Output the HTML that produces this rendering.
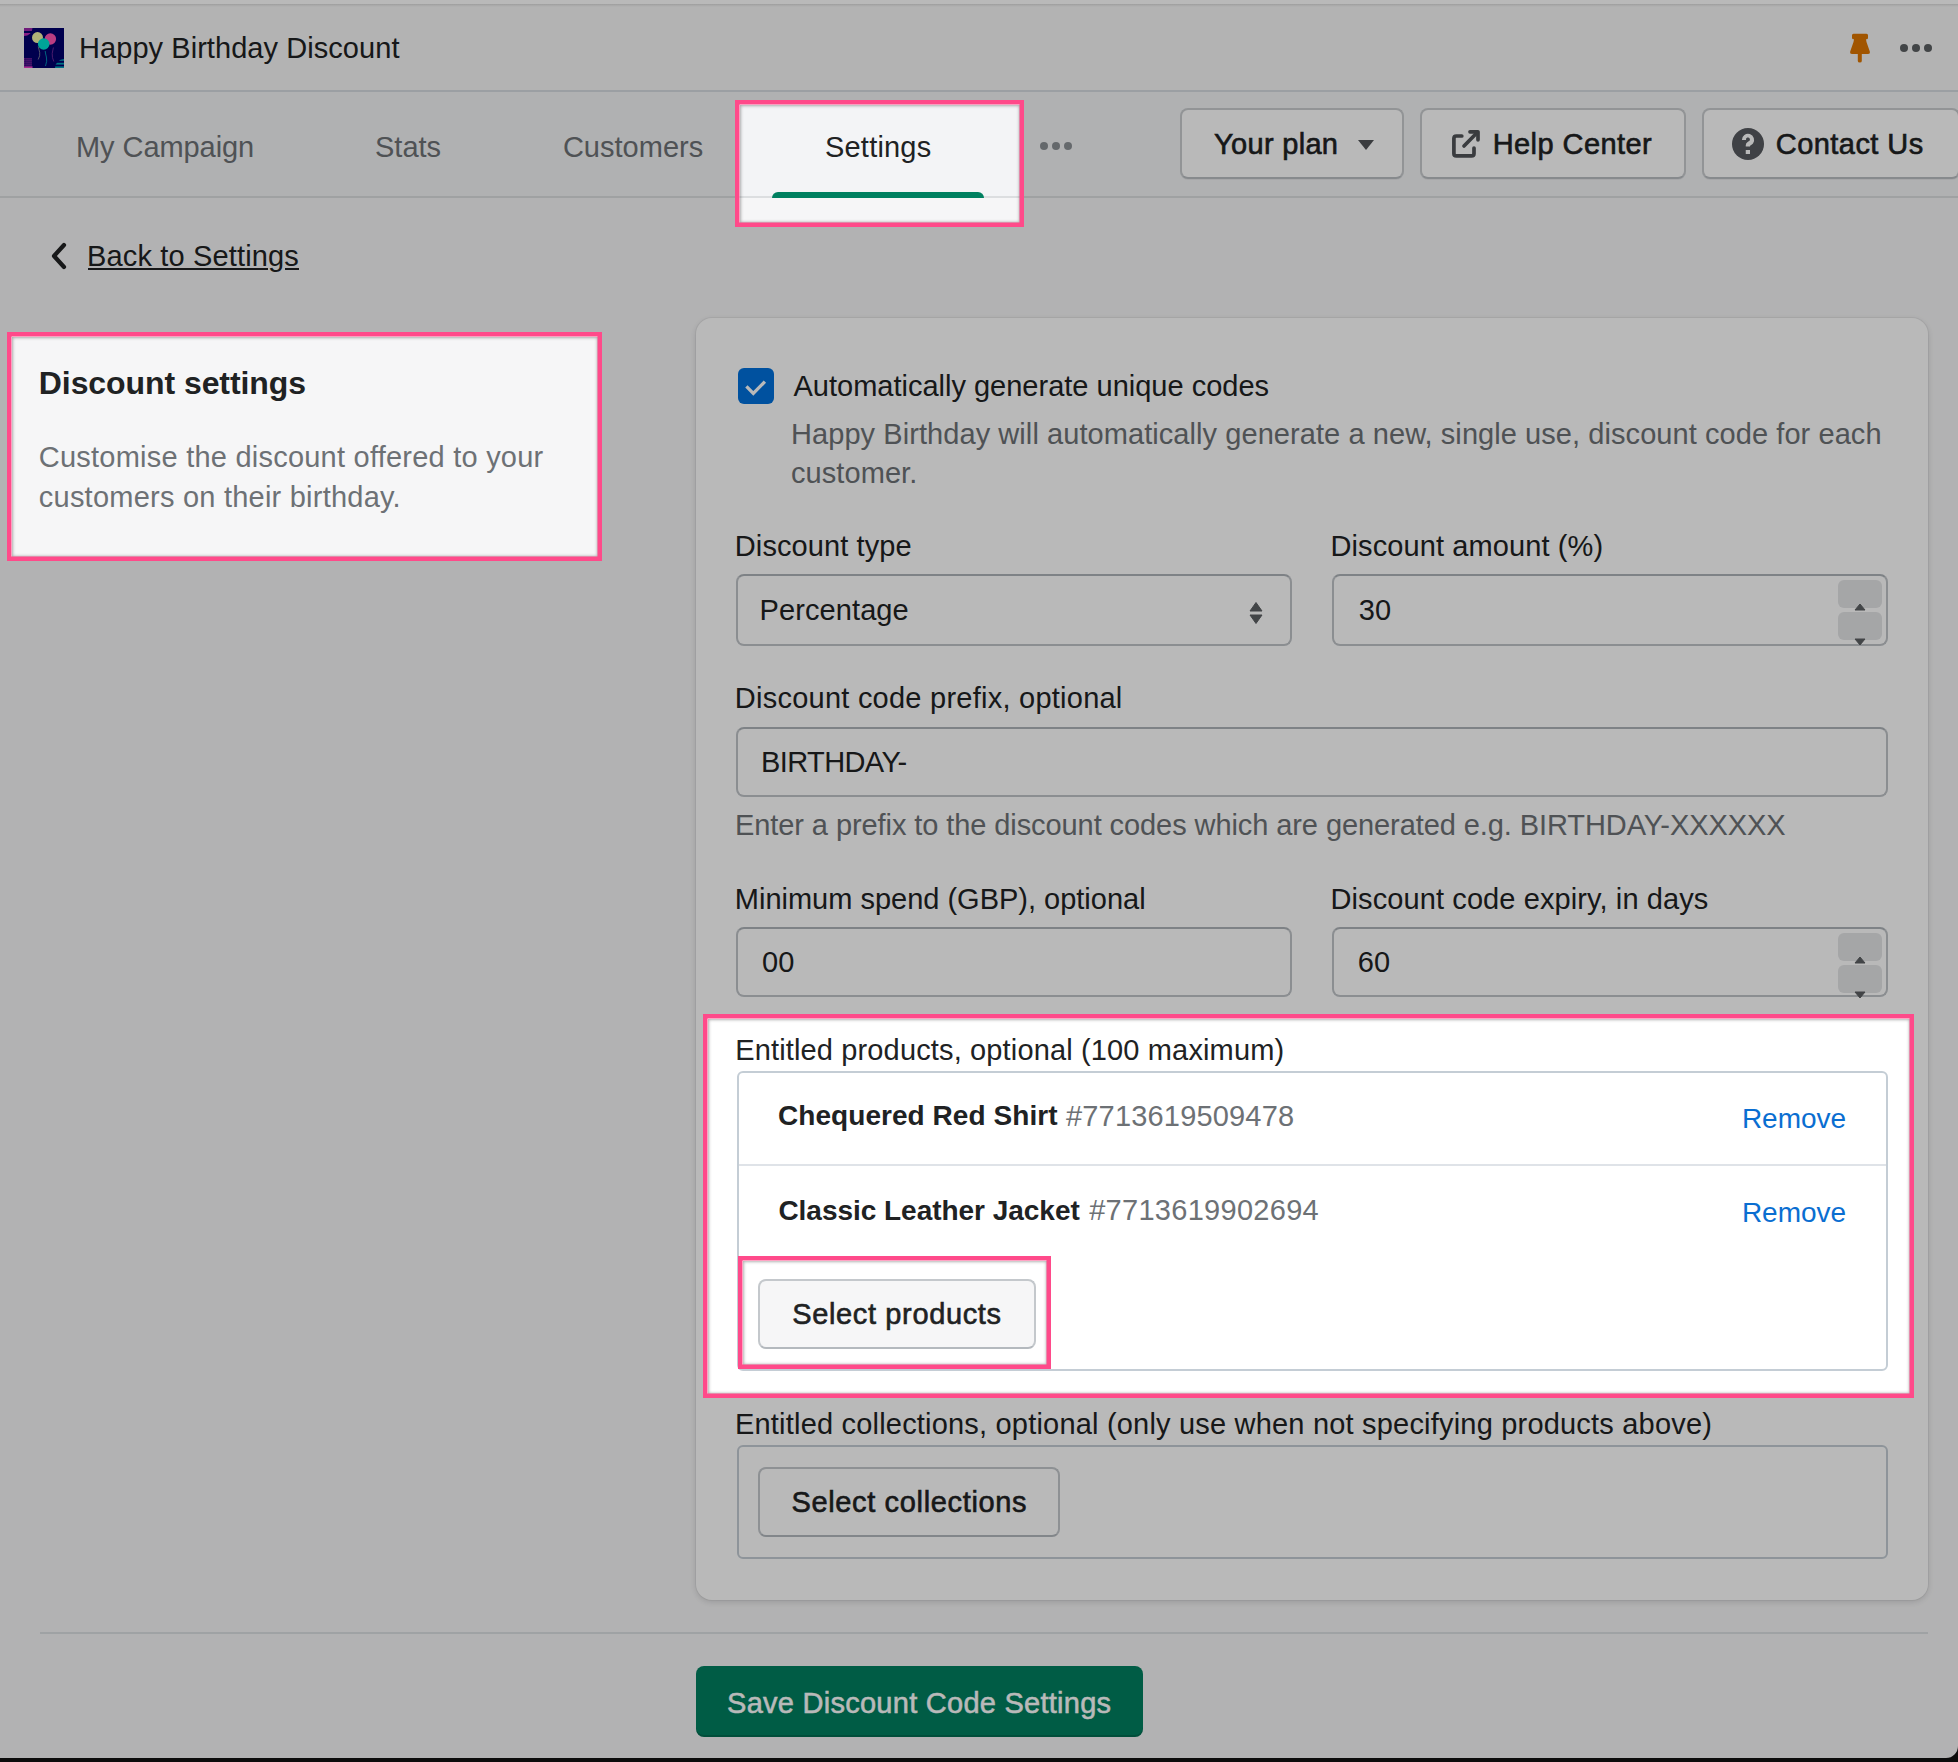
<!DOCTYPE html>
<html><head><meta charset="utf-8"><style>
html,body{margin:0;padding:0;}
body{width:1958px;height:1762px;position:relative;overflow:hidden;background:#f6f6f7;font-family:"Liberation Sans",sans-serif;color:#202223;}
.t{position:absolute;white-space:nowrap;line-height:40px;}
.b{position:absolute;box-sizing:border-box;}
svg{position:absolute;}
</style></head><body>
<div class="b" style="left:0px;top:0px;width:1958px;height:4px;background:#ffffff;"></div>
<div class="b" style="left:0px;top:4px;width:1958px;height:86px;background:linear-gradient(#d8d8d8 0px,#ebebeb 1.5px,#f7f7f7 3px,#f7f7f7 100%);"></div>
<div class="b" style="left:0px;top:90px;width:1958px;height:2px;background:#d6dce1;"></div>
<svg style="left:24px;top:28px" width="40" height="40" viewBox="0 0 40 40">
<rect width="40" height="40" fill="#00006c"/>
<clipPath id="c1"><path d="M0 0H8.5A8.5 8 0 0 1 0 8Z"/></clipPath>
<g clip-path="url(#c1)"><rect x="0" y="0" width="9" height="3" fill="#9a26a8"/><rect x="0" y="5" width="9" height="3.5" fill="#c02ab8"/></g>
<circle cx="13.5" cy="9.6" r="5.5" fill="#f2f6a6"/>
<circle cx="26.4" cy="11" r="5.7" fill="#ff54b4"/>
<path d="M14.2 18.5q0.8 3 1.5 6q0.6 3 -1.5 7" stroke="#a0a0a0" stroke-width="0.9" fill="none" opacity="0.8"/>
<path d="M21.2 23q0.3 3 1.2 6q1 4 -0.9 9" stroke="#00a8c0" stroke-width="0.9" fill="none" opacity="0.9"/>
<path d="M29.4 19.5q-0.6 3 -1.2 6q-0.3 4 1.6 8" stroke="#8030a0" stroke-width="0.9" fill="none" opacity="0.9"/>
<circle cx="19.7" cy="16" r="5.8" fill="#00e3d2"/>
<g fill="#e83cc8"><rect x="0.3" y="30.3" width="1.2" height="1.2"/><rect x="2.4" y="30.3" width="1.2" height="1.2"/><rect x="4.4" y="30.3" width="1.2" height="1.2"/><rect x="6.4" y="30.3" width="1.2" height="1.2"/>
<rect x="0.3" y="32.3" width="1.2" height="1.2"/><rect x="2.4" y="32.3" width="1.2" height="1.2"/><rect x="4.4" y="32.3" width="1.2" height="1.2"/><rect x="6.4" y="32.3" width="1.2" height="1.2"/>
<rect x="0.3" y="34.3" width="1.2" height="1.2"/><rect x="2.4" y="34.3" width="1.2" height="1.2"/><rect x="4.4" y="34.3" width="1.2" height="1.2"/><rect x="6.4" y="34.3" width="1.2" height="1.2"/>
<rect x="0.3" y="36.3" width="1.2" height="1.2"/><rect x="2.4" y="36.3" width="1.2" height="1.2"/><rect x="4.4" y="36.3" width="1.2" height="1.2"/><rect x="6.4" y="36.3" width="1.2" height="1.2"/>
<rect x="0" y="38.3" width="8.5" height="1.7"/></g>
<clipPath id="c2"><path d="M40 31A9 9 0 0 0 31 40H40Z"/></clipPath>
<g clip-path="url(#c2)" fill="#00a0b8"><rect x="28" y="31" width="12" height="1.8"/><rect x="28" y="34.8" width="12" height="1.8"/><rect x="28" y="38.4" width="12" height="1.6"/></g>
</svg>
<div class="t" id="hbd" style="left:79.00px;top:28.15px;font-size:29px;letter-spacing:0.059px;">Happy Birthday Discount</div>
<svg style="left:1848px;top:32px" width="26" height="32" viewBox="0 0 26 32">
<path d="M5.5 1.8H18.5Q20 1.8 20 3.3V5.8Q20 7.3 18.5 7.3H18L18.5 10L21.8 19.5Q22.3 22 20 22H13.8V29Q13.8 30.5 11.8 30.5Q9.8 30.5 9.8 29V22H4Q1.7 22 2.2 19.5L5.5 10L6 7.3H5.5Q4 7.3 4 5.8V3.3Q4 1.8 5.5 1.8Z" fill="#de7600"/>
</svg>
<div class="b" style="left:1899.6px;top:43.8px;width:8.400000000000091px;height:8.400000000000006px;background:#5c5f62;border-radius:50%;"></div>
<div class="b" style="left:1911.8px;top:43.8px;width:8.400000000000091px;height:8.400000000000006px;background:#5c5f62;border-radius:50%;"></div>
<div class="b" style="left:1924.0px;top:43.8px;width:8.400000000000091px;height:8.400000000000006px;background:#5c5f62;border-radius:50%;"></div>
<div class="b" style="left:0px;top:92px;width:1958px;height:104px;background:#f3f4f6;"></div>
<div class="b" style="left:0px;top:196px;width:1958px;height:2px;background:#dcdee0;"></div>
<div class="t" id="tab1" style="left:76.00px;top:126.75px;font-size:29px;color:#6d7175;letter-spacing:-0.070px;">My Campaign</div>
<div class="t" id="tab2" style="left:375.00px;top:126.75px;font-size:29px;color:#6d7175;">Stats</div>
<div class="t" id="tab3" style="left:562.90px;top:126.75px;font-size:29px;color:#6d7175;letter-spacing:0.026px;">Customers</div>
<div class="t" id="tab4" style="left:825.00px;top:126.75px;font-size:29px;letter-spacing:0.200px;">Settings</div>
<div class="b" style="left:772px;top:192px;width:212px;height:6px;background:#008060;border-radius:6px 6px 0 0;"></div>
<div class="b" style="left:1040px;top:142px;width:8px;height:8px;background:#8c9196;border-radius:50%;"></div>
<div class="b" style="left:1052px;top:142px;width:8px;height:8px;background:#8c9196;border-radius:50%;"></div>
<div class="b" style="left:1064px;top:142px;width:8px;height:8px;background:#8c9196;border-radius:50%;"></div>
<div class="b" style="left:1180px;top:108px;width:224px;height:71px;background:#ffffff;border:2px solid #c9cccf;border-bottom-color:#babfc3;border-radius:8px;box-shadow:0 1px 0 rgba(0,0,0,0.05);"></div>
<div class="b" style="left:1420px;top:108px;width:266px;height:71px;background:#ffffff;border:2px solid #c9cccf;border-bottom-color:#babfc3;border-radius:8px;box-shadow:0 1px 0 rgba(0,0,0,0.05);"></div>
<div class="b" style="left:1702px;top:108px;width:258px;height:71px;background:#ffffff;border:2px solid #c9cccf;border-bottom-color:#babfc3;border-radius:8px;box-shadow:0 1px 0 rgba(0,0,0,0.05);"></div>
<div class="t" id="yp" style="left:1214.10px;top:123.95px;font-size:29px;letter-spacing:0.300px;-webkit-text-stroke:0.6px #202223;">Your plan</div>
<svg style="left:1356px;top:138px" width="20" height="14" viewBox="0 0 20 14"><path d="M2 2H18L10 12Z" fill="#505357"/></svg>
<svg style="left:1440px;top:120px" width="50" height="45" viewBox="0 0 50 45"><g fill="none" stroke="#505357" stroke-width="3.7" stroke-linecap="round" stroke-linejoin="round"><path d="M21.8 16H16.4Q13.9 16 13.9 18.5V33.4Q13.9 35.9 16.4 35.9H31.5Q34 35.9 34 33.4V28"/><path d="M30 11.8H38V19.8"/><path d="M24 26L37 12.8"/></g></svg>
<div class="t" id="hc" style="left:1492.70px;top:123.95px;font-size:29px;letter-spacing:0.430px;-webkit-text-stroke:0.6px #202223;">Help Center</div>
<svg style="left:1731px;top:127px" width="34" height="34" viewBox="0 0 34 34"><circle cx="17" cy="17" r="16" fill="#575a5f"/><path d="M10.9 12.9A6.1 6.1 0 1 1 22 16.4Q21 17.6 19.7 18.3Q19 18.8 19 19.6H14.75V18.2Q14.75 16 16.9 14.8L18.2 14A2 2 0 1 0 15 12.9Z" fill="#ffffff"/><rect x="14.75" y="23" width="4.25" height="4" fill="#ffffff"/></svg>
<div class="t" id="cu" style="left:1775.80px;top:123.95px;font-size:29px;letter-spacing:0.444px;-webkit-text-stroke:0.6px #202223;">Contact Us</div>
<svg style="left:46px;top:238px" width="26" height="36" viewBox="0 0 26 36"><path d="M18 7L8 18L18 29" stroke="#202223" stroke-width="4.2" fill="none" stroke-linecap="round" stroke-linejoin="round"/></svg>
<div class="t" id="back" style="left:87.00px;top:235.95px;font-size:29px;letter-spacing:0.153px;">Back to Settings</div>
<div class="b" style="left:88px;top:268px;width:180px;height:2px;background:#202223;"></div>
<div class="b" style="left:285px;top:268px;width:14px;height:2px;background:#202223;"></div>
<div class="t" id="ds" style="left:38.80px;top:363.21px;font-size:32px;font-weight:700;letter-spacing:-0.075px;">Discount settings</div>
<div class="t" id="cap1" style="left:38.80px;top:436.95px;font-size:29px;color:#6d7175;letter-spacing:0.229px;">Customise the discount offered to your</div>
<div class="t" id="cap2" style="left:38.80px;top:476.95px;font-size:29px;color:#6d7175;letter-spacing:0.229px;">customers on their birthday.</div>
<div class="b" style="left:696px;top:318px;width:1232px;height:1282px;background:#ffffff;border-radius:16px;box-shadow:0 0 0 1px rgba(63,63,68,0.06),0 2px 6px rgba(63,63,68,0.18);"></div>
<div class="b" style="left:738px;top:368px;width:36px;height:36px;background:#0070dc;border-radius:6px;"></div>
<svg style="left:738px;top:368px" width="36" height="36" viewBox="0 0 36 36"><path d="M8.4 18.4L15.3 25.4L26.9 13.6" stroke="#ffffff" stroke-width="3.3" fill="none" stroke-linecap="butt" stroke-linejoin="miter"/></svg>
<div class="t" id="auto" style="left:793.50px;top:365.95px;font-size:29px;letter-spacing:-0.002px;">Automatically generate unique codes</div>
<div class="t" id="help1" style="left:791.00px;top:414.15px;font-size:29px;color:#6d7175;letter-spacing:0.068px;">Happy Birthday will automatically generate a new, single use, discount code for each</div>
<div class="t" id="help2" style="left:791.00px;top:453.25px;font-size:29px;color:#6d7175;letter-spacing:0.068px;">customer.</div>
<div class="t" id="dt" style="left:734.80px;top:526.45px;font-size:29px;letter-spacing:0.100px;">Discount type</div>
<div class="b" style="left:736px;top:574px;width:556px;height:72px;background:#ffffff;border:2px solid #c0c4c8;border-top-color:#aeb4b9;border-radius:8px;"></div>
<div class="t" id="pct" style="left:759.50px;top:589.95px;font-size:29px;letter-spacing:0.100px;">Percentage</div>
<svg style="left:1248px;top:600px" width="16" height="26" viewBox="0 0 16 26"><path d="M8 2.5L14 11H2Z M2 15H14L8 23.5Z" fill="#5c5f62" stroke="#5c5f62" stroke-width="1" stroke-linejoin="round"/></svg>
<div class="t" id="da" style="left:1330.50px;top:526.45px;font-size:29px;letter-spacing:0.100px;">Discount amount (%)</div>
<div class="b" style="left:1332px;top:574px;width:556px;height:72px;background:#ffffff;border:2px solid #c0c4c8;border-top-color:#aeb4b9;border-radius:8px;"></div>
<div class="t" id="v30" style="left:1358.80px;top:589.95px;font-size:29px;letter-spacing:0.100px;">30</div>
<div class="b" style="left:1838px;top:580px;width:44px;height:28px;background:#e4e5e7;border-radius:6px;"></div>
<div class="b" style="left:1838px;top:612px;width:44px;height:28px;background:#e4e5e7;border-radius:6px;"></div>
<svg style="left:1852px;top:602px" width="16" height="46" viewBox="0 0 16 46"><path d="M8 2L13 8H3Z M3 37H13L8 43Z" fill="#5c5f62" stroke="#5c5f62" stroke-width="1" stroke-linejoin="round"/></svg>
<div class="t" id="pl" style="left:734.80px;top:677.95px;font-size:29px;letter-spacing:0.244px;">Discount code prefix, optional</div>
<div class="b" style="left:736px;top:727px;width:1152px;height:70px;background:#ffffff;border:2px solid #c0c4c8;border-top-color:#aeb4b9;border-radius:8px;"></div>
<div class="t" id="bd" style="left:761.00px;top:741.65px;font-size:29px;letter-spacing:-0.600px;">BIRTHDAY-</div>
<div class="t" id="ep" style="left:735.00px;top:805.45px;font-size:29px;color:#6d7175;letter-spacing:-0.084px;">Enter a prefix to the discount codes which are generated e.g. BIRTHDAY-XXXXXX</div>
<div class="t" id="ms" style="left:734.80px;top:878.65px;font-size:29px;letter-spacing:-0.007px;">Minimum spend (GBP), optional</div>
<div class="b" style="left:736px;top:927px;width:556px;height:70px;background:#ffffff;border:2px solid #c0c4c8;border-top-color:#aeb4b9;border-radius:8px;"></div>
<div class="t" id="v00" style="left:762.00px;top:941.55px;font-size:29px;letter-spacing:0.100px;">00</div>
<div class="t" id="ex" style="left:1330.50px;top:878.65px;font-size:29px;letter-spacing:0.100px;">Discount code expiry, in days</div>
<div class="b" style="left:1332px;top:927px;width:556px;height:70px;background:#ffffff;border:2px solid #c0c4c8;border-top-color:#aeb4b9;border-radius:8px;"></div>
<div class="t" id="v60" style="left:1357.80px;top:941.55px;font-size:29px;letter-spacing:0.100px;">60</div>
<div class="b" style="left:1838px;top:933px;width:44px;height:28px;background:#e4e5e7;border-radius:6px;"></div>
<div class="b" style="left:1838px;top:965px;width:44px;height:28px;background:#e4e5e7;border-radius:6px;"></div>
<svg style="left:1852px;top:955px" width="16" height="46" viewBox="0 0 16 46"><path d="M8 2L13 8H3Z M3 37H13L8 43Z" fill="#5c5f62" stroke="#5c5f62" stroke-width="1" stroke-linejoin="round"/></svg>
<div class="t" id="ep2" style="left:735.20px;top:1030.25px;font-size:29px;letter-spacing:0.144px;">Entitled products, optional (100 maximum)</div>
<div class="b" style="left:737px;top:1071px;width:1151px;height:300px;border:2px solid #c4cdd5;border-radius:6px;"></div>
<div class="b" style="left:739px;top:1164px;width:1147px;height:2px;background:#dfe3e8;"></div>
<div class="t" id="p1" style="left:778.00px;top:1095.90px;font-size:28px;font-weight:700;letter-spacing:0.056px;">Chequered Red Shirt</div>
<div class="t" id="n1" style="left:1066.00px;top:1095.55px;font-size:29px;color:#6d7175;letter-spacing:0.177px;">#7713619509478</div>
<div class="t" id="r1" style="left:1741.90px;top:1099.10px;font-size:28px;color:#0a6ed1;letter-spacing:-0.020px;">Remove</div>
<div class="t" id="p2" style="left:778.40px;top:1190.60px;font-size:28px;font-weight:700;letter-spacing:-0.028px;">Classic Leather Jacket</div>
<div class="t" id="n2" style="left:1089.20px;top:1190.25px;font-size:29px;color:#6d7175;letter-spacing:0.284px;">#7713619902694</div>
<div class="t" id="r2" style="left:1741.90px;top:1193.10px;font-size:28px;color:#0a6ed1;letter-spacing:-0.020px;">Remove</div>
<div class="b" style="left:758px;top:1279px;width:278px;height:70px;background:#f6f6f7;border:2px solid #c4c8cc;border-bottom-color:#b4b9be;border-radius:8px;"></div>
<div class="t" id="sp" style="left:792.20px;top:1294.25px;font-size:29px;letter-spacing:0.643px;-webkit-text-stroke:0.6px #202223;">Select products</div>
<div class="t" id="ec" style="left:735.00px;top:1404.15px;font-size:29px;letter-spacing:0.193px;">Entitled collections, optional (only use when not specifying products above)</div>
<div class="b" style="left:737px;top:1445px;width:1151px;height:114px;border:2px solid #c4cdd5;border-radius:6px;"></div>
<div class="b" style="left:758px;top:1467px;width:302px;height:70px;background:#ffffff;border:2px solid #c4c8cc;border-bottom-color:#b4b9be;border-radius:8px;"></div>
<div class="t" id="sc" style="left:791.40px;top:1482.25px;font-size:29px;letter-spacing:0.653px;-webkit-text-stroke:0.6px #202223;">Select collections</div>
<div class="b" style="left:40px;top:1632px;width:1888px;height:2px;background:#dcdfe2;"></div>
<div class="b" style="left:696px;top:1666px;width:447px;height:71px;background:#007f5f;border-radius:8px;box-shadow:inset 0 -2px 0 rgba(0,0,0,0.15);"></div>
<div class="t" id="save" style="left:727.10px;top:1682.75px;font-size:29px;color:#ffffff;letter-spacing:0.261px;-webkit-text-stroke:0.5px #ffffff;">Save Discount Code Settings</div>
<div class="b" style="left:0px;top:1758px;width:1958px;height:4px;background:#111111;"></div>
<svg style="left:1940px;top:1740px" width="18" height="18" viewBox="0 0 18 18"><path d="M18 6V18H6A12 12 0 0 0 18 6Z" fill="#111111"/></svg>
<svg style="left:0;top:0" width="1958" height="1762"><path fill-rule="evenodd" fill="rgba(0,0,0,0.275)" d="M0 0H1958V1762H0Z M735 100H1024V227H735Z M7 332H602V561H7Z M703 1014H1914V1398H703Z"/></svg>
<div class="b" style="left:739.5px;top:104.5px;width:280.0px;height:118.0px;box-shadow:inset 0 0 3px 1px rgba(0,0,0,0.30);"></div>
<div class="b" style="left:11.5px;top:336.5px;width:586.0px;height:220.0px;box-shadow:inset 0 0 3px 1px rgba(0,0,0,0.30);"></div>
<div class="b" style="left:707.5px;top:1018.5px;width:1202.0px;height:375.0px;box-shadow:inset 0 0 3px 1px rgba(0,0,0,0.30);"></div>
<div class="b" style="left:742.5px;top:1260.5px;width:304.0px;height:104.0px;box-shadow:inset 0 0 3px 1px rgba(0,0,0,0.30);"></div>
<svg style="left:0;top:0" width="1958" height="1762"><g fill="none" stroke="#ff4a8a" stroke-width="4.5"><rect x="737.25" y="102.25" width="284.5" height="122.5"/><rect x="9.25" y="334.25" width="590.5" height="224.5"/><rect x="705.25" y="1016.25" width="1206.5" height="379.5"/><rect x="740.25" y="1258.25" width="308.5" height="108.5"/></g></svg>
</body></html>
